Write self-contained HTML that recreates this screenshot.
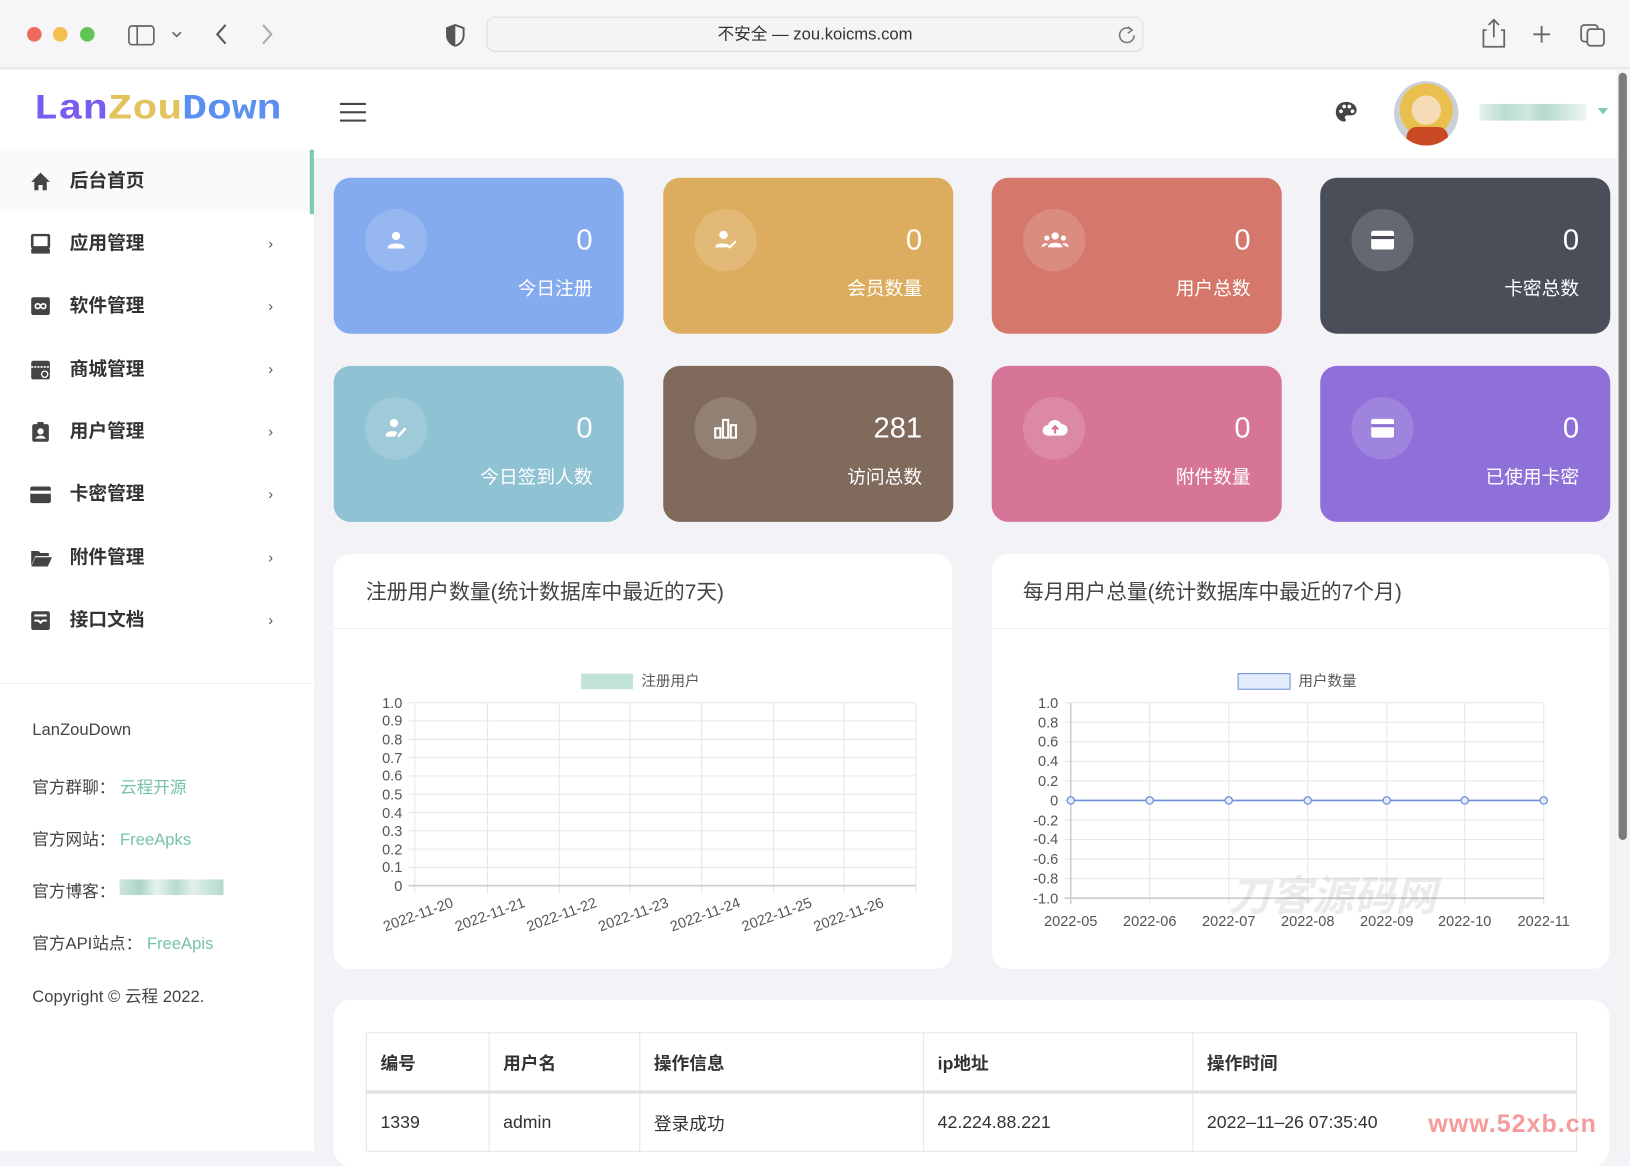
<!DOCTYPE html>
<html><head><meta charset="utf-8"><style>
*{margin:0;padding:0;box-sizing:border-box}
html,body{width:1630px;height:1151px;overflow:hidden;background:#f3f3f7}
#w{position:absolute;left:0;top:0;width:1568px;height:1107px;transform:scale(1.03954);transform-origin:0 0;font-family:"Liberation Sans","Noto Sans CJK SC",sans-serif;color:#333;background:#f3f3f7}
.a{position:absolute}
.tb{left:0;top:0;width:1568px;height:66px;background:#f6f5f7;border-bottom:1px solid #dedde0}
.dot{width:14px;height:14px;border-radius:50%;top:26px}
.url{left:468px;top:16px;width:632px;height:34px;border:1px solid #dcdbdf;border-radius:8px;background:#f4f3f6;text-align:center;line-height:34px;font-size:16px;color:#333}
.side{left:0;top:67px;width:302px;height:1040px;background:#fff}
.mi{left:0;width:298px;height:60px;font-size:18px;font-weight:bold;color:#333;line-height:60px}
.mi .t{position:absolute;left:67px}
.mi .ar{position:absolute;left:258px;font-size:14px;color:#555;font-weight:normal}
.mi svg{position:absolute;left:29px;top:21px}
.ft{left:31px;font-size:16px;color:#444}
.ft b{font-weight:normal;color:#74c3a8}
.hd{left:302px;top:67px;width:1253px;height:85px;background:#fff}
.card{width:279px;height:150px;border-radius:16px;color:#fff}
.card .ic{position:absolute;left:30px;top:30px;width:60px;height:60px;border-radius:50%;background:rgba(255,255,255,.15)}
.card .ic svg{position:absolute;left:18px;top:18px}
.card .n{position:absolute;right:30px;top:42px;font-size:28px;line-height:36px}
.card .l{position:absolute;right:30px;top:93px;font-size:18px}
.pan{background:#fff;border-radius:16px}
.ct{font-size:20px;color:#444}
td{border:1px solid #e6e6e6;padding:0 13px;font-size:17px;color:#333}
</style></head><body><div id="w">
<div class="a tb"></div>
<div class="a dot" style="left:26px;background:#ec6a5e"></div>
<div class="a dot" style="left:51px;background:#f4bf4f"></div>
<div class="a dot" style="left:77px;background:#61c554"></div>
<svg class="a" style="left:122px;top:22px" width="60" height="24"><rect x="2" y="3" width="24" height="18" rx="3" fill="none" stroke="#666" stroke-width="1.6"/><line x1="10" y1="3" x2="10" y2="21" stroke="#666" stroke-width="1.6"/><path d="M44 9l4 4 4-4" fill="none" stroke="#666" stroke-width="1.6"/></svg>
<svg class="a" style="left:200px;top:20px" width="70" height="26"><path d="M17 4l-8 9 8 9" fill="none" stroke="#555" stroke-width="2"/><path d="M53 4l8 9-8 9" fill="none" stroke="#aaa" stroke-width="2"/></svg>
<svg class="a" style="left:428px;top:22px" width="20" height="24"><path d="M10 2l8 3v7c0 5-4 9-8 10-4-1-8-5-8-10V5z" fill="none" stroke="#555" stroke-width="1.8"/><path d="M10 2v20c-4-1-8-5-8-10V5z" fill="#555"/></svg>
<div class="a url">不安全 — zou.koicms.com</div>
<svg class="a" style="left:1075px;top:24px" width="18" height="18"><path d="M14 5a7 7 0 1 0 2 5" fill="none" stroke="#777" stroke-width="1.5"/><path d="M10 2l4 3-4 3" fill="none" stroke="#777" stroke-width="1.5"/></svg>
<svg class="a" style="left:1425px;top:16px" width="130" height="32"><path d="M5 13h-3v16h20V13h-3M12 3v17M7 8l5-5 5 5" fill="none" stroke="#666" stroke-width="1.7"/><path d="M58 9v16M50 17h16" stroke="#666" stroke-width="1.8"/><rect x="96" y="8" width="16" height="16" rx="3" fill="none" stroke="#666" stroke-width="1.7"/><rect x="102" y="12" width="16" height="16" rx="3" fill="#f6f5f7" stroke="#666" stroke-width="1.7"/></svg>

<div class="a side"></div>
<div class="a" style="left:0;top:144px;width:302px;height:1px;background:#f0f0f0"></div>
<div class="a" style="left:32px;top:86px;font-family:'Liberation Mono',monospace;font-weight:bold;font-size:34px;transform:scaleX(1.17);transform-origin:0 0;line-height:40px"><span style="color:#7a5cf0">Lan</span><span style="color:#e3c35e">Zou</span><span style="color:#5b8ff0">Down</span></div>

<div class="a mi" style="top:144px;background:#fafafa"><svg width="20" height="20" viewBox="0 0 20 20"><path d="M10 1L1 10h3v8h4v-5h4v5h4v-8h3z" fill="#444"/></svg><span class="t">后台首页</span></div>
<div class="a" style="left:298px;top:144px;width:4px;height:62px;background:#7fc8b0"></div>
<div class="a mi" style="top:204px"><svg width="20" height="20"><rect x="2" y="1" width="16" height="12" rx="1" fill="none" stroke="#444" stroke-width="2.5"/><rect x="1" y="14" width="18" height="5" rx="1" fill="#444"/></svg><span class="t">应用管理</span><span class="ar">›</span></div>
<div class="a mi" style="top:264px"><svg width="20" height="20"><rect x="1" y="1" width="18" height="17" rx="2" fill="#444"/><path d="M5 9.5c0-3 4-3 5 0s5 3 5 0-4-3-5 0-5 3-5 0" fill="none" stroke="#fff" stroke-width="1.6"/></svg><span class="t">软件管理</span><span class="ar">›</span></div>
<div class="a mi" style="top:325px"><svg width="20" height="20"><rect x="1" y="1" width="18" height="18" rx="2" fill="#444"/><path d="M1 7h18" stroke="#fff" stroke-width="1.5" stroke-dasharray="2 1"/><circle cx="14" cy="14" r="3" fill="none" stroke="#fff" stroke-width="1.3"/></svg><span class="t">商城管理</span><span class="ar">›</span></div>
<div class="a mi" style="top:385px"><svg width="20" height="20"><rect x="2" y="2" width="16" height="17" rx="2" fill="#444"/><circle cx="10" cy="9" r="3" fill="#fff"/><path d="M5 16c1-4 9-4 10 0z" fill="#fff"/><rect x="7" y="0" width="6" height="3" fill="#444"/></svg><span class="t">用户管理</span><span class="ar">›</span></div>
<div class="a mi" style="top:445px"><svg width="20" height="20"><rect x="0" y="2" width="20" height="16" rx="2" fill="#444"/><rect x="0" y="6" width="20" height="3" fill="#fff"/></svg><span class="t">卡密管理</span><span class="ar">›</span></div>
<div class="a mi" style="top:506px"><svg width="22" height="20"><path d="M1 3h7l2 2h8v3H5L1 17z" fill="#444"/><path d="M5 9h16l-4 9H1z" fill="#444"/></svg><span class="t">附件管理</span><span class="ar">›</span></div>
<div class="a mi" style="top:566px"><svg width="20" height="20"><rect x="1" y="1" width="18" height="18" rx="2" fill="#444"/><path d="M4 5h12M4 10h4l2 2 2-2h4" stroke="#fff" stroke-width="2" fill="none"/></svg><span class="t">接口文档</span><span class="ar">›</span></div>
<div class="a" style="left:0;top:657px;width:302px;height:1px;background:#eee"></div>
<div class="a ft" style="top:694px">LanZouDown</div>
<div class="a ft" style="top:744px">官方群聊： <b>云程开源</b></div>
<div class="a ft" style="top:794px">官方网站： <b>FreeApks</b></div>
<div class="a ft" style="top:844px">官方博客：</div>
<div class="a" style="left:115px;top:846px;width:100px;height:15px;background:linear-gradient(90deg,#cfe6de,#a9d5c5 20%,#e8f3ef 35%,#b6dbcd 55%,#e2f0eb 70%,#b2d9cb)"></div>
<div class="a ft" style="top:894px">官方API站点： <b>FreeApis</b></div>
<div class="a ft" style="top:945px">Copyright © 云程 2022.</div>

<div class="a hd"></div>
<div class="a" style="left:327px;top:99px;width:25px;height:2px;background:#444;box-shadow:0 8px 0 #444,0 16px 0 #444"></div>
<svg class="a" style="left:1284px;top:97px" width="22" height="22" viewBox="0 0 22 22"><path d="M11 1C5 1 1 5 1 11c0 5 4 9 8 9 2 0 2-2 1-3s0-3 2-3h3c4 0 6-2 6-5C21 4 16 1 11 1z" fill="#444"/><circle cx="6" cy="10" r="1.8" fill="#fff"/><circle cx="9" cy="5.5" r="1.8" fill="#fff"/><circle cx="14" cy="5.5" r="1.8" fill="#fff"/><circle cx="17" cy="10" r="1.8" fill="#fff"/></svg>
<div class="a" style="left:1341px;top:78px;width:62px;height:62px;border-radius:50%;background:radial-gradient(circle at 50% 45%,#f6dcb6 0 30%,#e9c04e 31% 55%,#c9d0d8 56%);overflow:hidden"><div class="a" style="left:12px;top:44px;width:40px;height:20px;background:#c94a22;border-radius:10px 10px 0 0"></div></div>
<div class="a" style="left:1423px;top:100px;width:103px;height:16px;background:linear-gradient(90deg,#e6f2ee,#b9dcd0 25%,#cde7de 45%,#b5dacb 60%,#d6ebe3 85%,#eef6f3)"></div>
<div class="a" style="left:1537px;top:104px;border:5px solid transparent;border-top:6px solid #7fc8b0"></div>
<div class="a" style="left:1555px;top:67px;width:13px;height:1040px;background:#f5f5f5"></div>
<div class="a" style="left:1557px;top:70px;width:8px;height:738px;border-radius:4px;background:#7c7c7c"></div>

<div class="a card" style="left:321px;top:171px;background:#85abef"><div class="ic"><svg width="24" height="24"><circle cx="12" cy="8" r="4" fill="#fff"/><path d="M4 19c0-5 16-5 16 0v1H4z" fill="#fff"/></svg></div><div class="n">0</div><div class="l">今日注册</div></div>
<div class="a card" style="left:638px;top:171px;background:#ddad5f"><div class="ic"><svg width="24" height="24"><circle cx="10" cy="7" r="4" fill="#fff"/><path d="M2 19c0-5 12-5 12-1v1H2z" fill="#fff"/><path d="M13 16l3 3 6-6" stroke="#fff" stroke-width="2" fill="none"/></svg></div><div class="n">0</div><div class="l">会员数量</div></div>
<div class="a card" style="left:954px;top:171px;background:#d5786b"><div class="ic"><svg width="26" height="24"><circle cx="13" cy="8" r="3.5" fill="#fff"/><circle cx="5" cy="10" r="2.5" fill="#fff"/><circle cx="21" cy="10" r="2.5" fill="#fff"/><path d="M6 19c0-6 14-6 14 0zM0 19c0-4 5-5 6-3zM26 19c0-4-5-5-6-3z" fill="#fff"/></svg></div><div class="n">0</div><div class="l">用户总数</div></div>
<div class="a card" style="left:1270px;top:171px;background:#4a4e59"><div class="ic"><svg width="24" height="24"><rect x="1" y="3" width="22" height="18" rx="2" fill="#fff"/><rect x="1" y="8" width="22" height="3" fill="#4a4e59"/></svg></div><div class="n">0</div><div class="l">卡密总数</div></div>
<div class="a card" style="left:321px;top:352px;background:#8fc2d3"><div class="ic"><svg width="24" height="24"><circle cx="10" cy="7" r="4" fill="#fff"/><path d="M2 19c0-5 10-5 11-3l-2 4H2z" fill="#fff"/><path d="M14 20l7-8" stroke="#fff" stroke-width="2.5"/></svg></div><div class="n">0</div><div class="l">今日签到人数</div></div>
<div class="a card" style="left:638px;top:352px;background:#7f6a5b"><div class="ic"><svg width="24" height="24"><path d="M2 12h5v9H2zM9.5 4h5v17h-5zM17 9h5v12h-5z" fill="none" stroke="#fff" stroke-width="2"/></svg></div><div class="n">281</div><div class="l">访问总数</div></div>
<div class="a card" style="left:954px;top:352px;background:#d67598"><div class="ic"><svg width="26" height="24"><path d="M6 19a5 5 0 0 1 0-10 7 7 0 0 1 13-1 5.5 5.5 0 0 1 1 11z" fill="#fff"/><path d="M13 17V11M10 13l3-3 3 3" stroke="#d67598" stroke-width="2" fill="none"/></svg></div><div class="n">0</div><div class="l">附件数量</div></div>
<div class="a card" style="left:1270px;top:352px;background:#8f6fd8"><div class="ic"><svg width="24" height="24"><rect x="1" y="3" width="22" height="18" rx="2" fill="#fff"/><rect x="1" y="8" width="22" height="3" fill="#8f6fd8"/></svg></div><div class="n">0</div><div class="l">已使用卡密</div></div>

<div class="a pan" style="left:321px;top:533px;width:595px;height:399px"></div>
<div class="a pan" style="left:954px;top:533px;width:594px;height:399px"></div>
<div class="a ct" style="left:352px;top:553px">注册用户数量(统计数据库中最近的7天)</div>
<div class="a ct" style="left:984px;top:553px">每月用户总量(统计数据库中最近的7个月)</div>
<div class="a" style="left:321px;top:604px;width:595px;height:1px;background:#eee"></div>
<div class="a" style="left:954px;top:604px;width:594px;height:1px;background:#eee"></div>

<svg class="a" style="left:0;top:0" width="1568" height="1107" font-family="Liberation Sans,Noto Sans CJK SC,sans-serif" font-size="14" fill="#555">
<rect x="559" y="648" width="50" height="15" fill="#c2e3da"/><text x="617" y="660" fill="#555">注册用户</text>
<g stroke="#e6e6e6" stroke-width="1">
<line x1="393" y1="676" x2="881" y2="676"/><line x1="393" y1="693.6" x2="881" y2="693.6"/><line x1="393" y1="711.2" x2="881" y2="711.2"/><line x1="393" y1="728.8" x2="881" y2="728.8"/><line x1="393" y1="746.4" x2="881" y2="746.4"/><line x1="393" y1="764" x2="881" y2="764"/><line x1="393" y1="781.6" x2="881" y2="781.6"/><line x1="393" y1="799.2" x2="881" y2="799.2"/><line x1="393" y1="816.8" x2="881" y2="816.8"/><line x1="393" y1="834.4" x2="881" y2="834.4"/>
<line x1="399" y1="676" x2="399" y2="860"/><line x1="469" y1="676" x2="469" y2="860"/><line x1="538" y1="676" x2="538" y2="860"/><line x1="606" y1="676" x2="606" y2="860"/><line x1="675" y1="676" x2="675" y2="860"/><line x1="744" y1="676" x2="744" y2="860"/><line x1="812" y1="676" x2="812" y2="860"/><line x1="881" y1="676" x2="881" y2="860"/>
</g>
<line x1="393" y1="852" x2="881" y2="852" stroke="#ccc" stroke-width="1.5"/>
<g text-anchor="end"><text x="387" y="681">1.0</text><text x="387" y="698">0.9</text><text x="387" y="716">0.8</text><text x="387" y="734">0.7</text><text x="387" y="751">0.6</text><text x="387" y="769">0.5</text><text x="387" y="787">0.4</text><text x="387" y="804">0.3</text><text x="387" y="822">0.2</text><text x="387" y="839">0.1</text><text x="387" y="857">0</text></g>
<g text-anchor="end"><text transform="translate(437,872) rotate(-20)">2022-11-20</text><text transform="translate(506,872) rotate(-20)">2022-11-21</text><text transform="translate(575,872) rotate(-20)">2022-11-22</text><text transform="translate(644,872) rotate(-20)">2022-11-23</text><text transform="translate(713,872) rotate(-20)">2022-11-24</text><text transform="translate(782,872) rotate(-20)">2022-11-25</text><text transform="translate(851,872) rotate(-20)">2022-11-26</text></g>

<rect x="1191" y="648" width="50" height="15" fill="#e3eafa" stroke="#6f8fd8"/><text x="1249" y="660">用户数量</text>
<g stroke="#e6e6e6">
<line x1="1024" y1="676" x2="1485" y2="676"/><line x1="1024" y1="694.8" x2="1485" y2="694.8"/><line x1="1024" y1="713.6" x2="1485" y2="713.6"/><line x1="1024" y1="732.4" x2="1485" y2="732.4"/><line x1="1024" y1="751.2" x2="1485" y2="751.2"/><line x1="1024" y1="770" x2="1485" y2="770"/><line x1="1024" y1="788.8" x2="1485" y2="788.8"/><line x1="1024" y1="807.6" x2="1485" y2="807.6"/><line x1="1024" y1="826.4" x2="1485" y2="826.4"/><line x1="1024" y1="845.2" x2="1485" y2="845.2"/>
<line x1="1106" y1="676" x2="1106" y2="870"/><line x1="1182" y1="676" x2="1182" y2="870"/><line x1="1258" y1="676" x2="1258" y2="870"/><line x1="1334" y1="676" x2="1334" y2="870"/><line x1="1409" y1="676" x2="1409" y2="870"/><line x1="1485" y1="676" x2="1485" y2="870"/>
</g>
<line x1="1024" y1="864" x2="1485" y2="864" stroke="#ccc" stroke-width="1.5"/><line x1="1030" y1="676" x2="1030" y2="870" stroke="#ccc" stroke-width="1.5"/>
<g text-anchor="end"><text x="1018" y="681">1.0</text><text x="1018" y="700">0.8</text><text x="1018" y="718">0.6</text><text x="1018" y="737">0.4</text><text x="1018" y="756">0.2</text><text x="1018" y="775">0</text><text x="1018" y="794">-0.2</text><text x="1018" y="812">-0.4</text><text x="1018" y="831">-0.6</text><text x="1018" y="850">-0.8</text><text x="1018" y="869">-1.0</text></g>
<text x="1182" y="876" font-size="40" font-weight="bold" font-style="italic" fill="#000" fill-opacity=".08" font-family="Noto Sans CJK SC,sans-serif">刀客源码网</text>
<line x1="1030" y1="770" x2="1485" y2="770" stroke="#6f8fd8" stroke-width="1.5"/>
<g fill="#e3eafa" stroke="#6f8fd8" stroke-width="1.2"><circle cx="1030" cy="770" r="3.5"/><circle cx="1106" cy="770" r="3.5"/><circle cx="1182" cy="770" r="3.5"/><circle cx="1258" cy="770" r="3.5"/><circle cx="1334" cy="770" r="3.5"/><circle cx="1409" cy="770" r="3.5"/><circle cx="1485" cy="770" r="3.5"/></g>
<g text-anchor="middle"><text x="1030" y="891">2022-05</text><text x="1106" y="891">2022-06</text><text x="1182" y="891">2022-07</text><text x="1258" y="891">2022-08</text><text x="1334" y="891">2022-09</text><text x="1409" y="891">2022-10</text><text x="1485" y="891">2022-11</text></g>
</svg>

<div class="a pan" style="left:321px;top:962px;width:1227px;height:160px"></div>
<table class="a" style="left:352px;top:993px;width:1165px;border-collapse:collapse">
<tr style="height:57px;border-bottom:3px solid #e0e0e0"><td style="width:118px;font-weight:bold">编号</td><td style="width:145px;font-weight:bold">用户名</td><td style="width:273px;font-weight:bold">操作信息</td><td style="width:259px;font-weight:bold">ip地址</td><td style="font-weight:bold">操作时间</td></tr>
<tr style="height:57px"><td>1339</td><td>admin</td><td>登录成功</td><td>42.224.88.221</td><td>2022–11–26 07:35:40</td></tr>
</table>
<div class="a" style="left:1374px;top:1068px;font-size:24px;font-weight:bold;color:#f27a7a;opacity:.75;letter-spacing:1px">www.52xb.cn</div>
</div></body></html>
